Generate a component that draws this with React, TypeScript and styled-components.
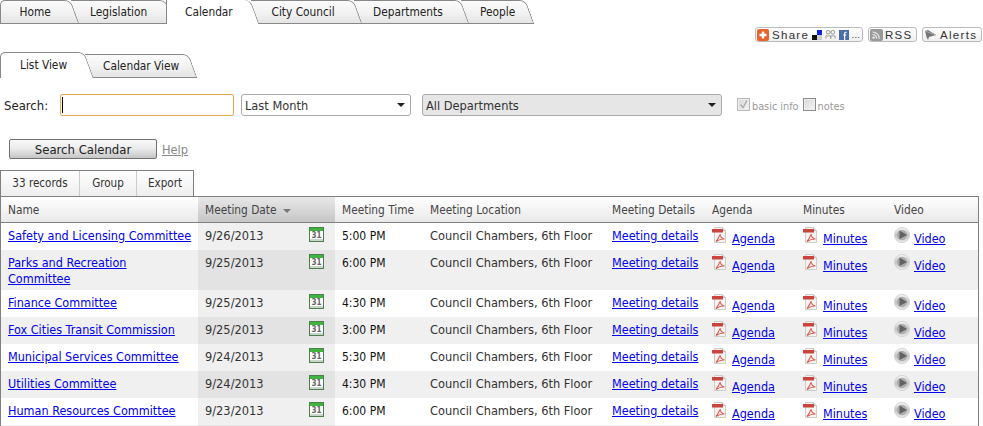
import React from "react";
import styled, { createGlobalStyle, css } from "styled-components";

const FONT = `"DejaVu Sans Condensed", "Noto Sans", Tahoma, sans-serif`;

const Global = createGlobalStyle`
  html, body { margin: 0; padding: 0; background: #fff; overflow: hidden; height: 426px; }
  body { font-family: ${FONT}; font-size: 12.7px; color: #333; }
`;

const Page = styled.div`
  width: 983px;
  height: 426px;
  overflow: hidden;
`;

const TabBar = styled.nav<{ $h: number; $mt?: number }>`
  display: flex;
  align-items: flex-end;
  height: ${(p) => p.$h}px;
  margin-top: ${(p) => p.$mt ?? 0}px;
`;

const tabGradient = "linear-gradient(#fbfbfb, #f4f4f4 45%, #e4e4e4)";

const Tab = styled.a<{ $w: number; $h: number; $z: number; $pl: number; $active?: boolean; $first?: boolean; $noTop?: boolean }>`
  position: relative;
  box-sizing: border-box;
  flex: none;
  width: ${(p) => p.$w}px;
  height: ${(p) => p.$h}px;
  margin-left: ${(p) => (p.$first ? 0 : -8)}px;
  padding-left: ${(p) => p.$pl}px;
  font-size: 11.8px;
  line-height: ${(p) => p.$h}px;
  color: #222;
  z-index: ${(p) => p.$z};
  white-space: nowrap;
  span { position: relative; z-index: 2; }

  &::before {
    content: "";
    position: absolute;
    left: 0;
    right: 14px;
    top: 0;
    bottom: 0;
    box-sizing: border-box;
    background: ${(p) => (p.$active ? "#fff" : tabGradient)};
    border-top: ${(p) => (p.$noTop ? "none" : "1px solid #888")};
    border-bottom: ${(p) => (p.$active ? "none" : "1px solid #888")};
    ${(p) => (p.$first || p.$active) && css`border-left: 1px solid #888;`}
    border-top-left-radius: ${(p) => (p.$first ? 5 : 0)}px;
    z-index: 1;
  }
  &::after {
    content: "";
    position: absolute;
    right: 4px;
    width: 22px;
    top: 0;
    bottom: 0;
    box-sizing: border-box;
    background: ${(p) => (p.$active ? "#fff" : tabGradient)};
    border-top: ${(p) => (p.$noTop ? "none" : "1px solid #888")};
    border-right: 1px solid #888;
    border-bottom: ${(p) => (p.$active ? "none" : "1px solid #888")};
    border-top-right-radius: 6px;
    transform: skewX(20deg);
    z-index: 0;
  }
`;

const ShareRow = styled.div`
  display: flex;
  justify-content: flex-end;
  gap: 5px;
  height: 15px;
  margin-top: 3px;
  padding-right: 1px;
`;

const ShareButton = styled.a<{ $w: number; $gap: number }>`
  box-sizing: border-box;
  width: ${(p) => p.$w}px;
  height: 15px;
  display: flex;
  align-items: center;
  gap: ${(p) => p.$gap}px;
  padding-left: 1px;
  border: 1px solid #bbb;
  border-radius: 3px;
  background: linear-gradient(#fff, #efefef);
  font-family: "Liberation Sans", Arial, sans-serif;
  font-size: 11.5px;
  letter-spacing: 1.3px;
  color: #333;
  svg { flex: none; }
`;

const More = styled.span`
  font-size: 9px;
  letter-spacing: 0;
  margin-left: -1px;
`;

const SearchRow = styled.div`
  display: flex;
  align-items: center;
  height: 22px;
  margin-top: 16px;
  padding-left: 4px;
`;

const SearchLabel = styled.label`
  width: 56px;
  font-size: 13px;
  color: #222;
`;

const InputWrap = styled.div`
  position: relative;
  width: 174px;
  height: 22px;
  &::after {
    content: "";
    position: absolute;
    left: 2px;
    top: 3px;
    width: 1px;
    height: 16px;
    background: #000;
  }
`;

const SearchInput = styled.input`
  box-sizing: border-box;
  width: 100%;
  height: 100%;
  border: 1px solid #e3aa55;
  border-radius: 2px;
  outline: none;
  box-shadow: inset 0 0 1px #f2d6a8;
  background: #fff;
`;

const SelectBox = styled.div<{ $w: number; $ml: number; $gray?: boolean }>`
  position: relative;
  box-sizing: border-box;
  width: ${(p) => p.$w}px;
  height: 22px;
  margin-left: ${(p) => p.$ml}px;
  padding-left: 3px;
  line-height: 21px;
  border: 1px solid #aaa;
  border-radius: 3px;
  background: ${(p) => (p.$gray ? "#e6e6e6" : "#fff")};
  color: #333;
  &::after {
    content: "";
    position: absolute;
    top: 8px;
    border: 4px solid transparent;
    border-top: 4px solid #222;
    border-bottom: none;
    right: 5px;
  }
`;

const CheckLabel = styled.span<{ $ml: number }>`
  display: flex;
  align-items: center;
  gap: 2px;
  margin-left: ${(p) => p.$ml}px;
  padding-top: 2px;
  color: #999;
  font-size: 10.8px;
`;

const CheckBox = styled.span<{ $dark?: boolean }>`
  box-sizing: border-box;
  flex: none;
  width: 13px;
  height: 13px;
  margin-top: -3px;
  border: 1px solid ${(p) => (p.$dark ? "#8c8c8c" : "#b8b8b8")};
  background: linear-gradient(135deg, #d8d8d8, #f4f4f4);
  box-shadow: inset 0 0 0 1px #eee;
  display: flex;
  svg { display: block; }
`;

const ActionRow = styled.div`
  display: flex;
  align-items: center;
  height: 20px;
  margin-top: 23px;
  padding-left: 9px;
`;

const SearchButton = styled.button`
  box-sizing: border-box;
  width: 148px;
  height: 20px;
  padding: 0;
  border: 1px solid #707070;
  border-radius: 2px;
  background: linear-gradient(#f8f8f8, #ececec 45%, #c6c6c6);
  font-family: inherit;
  font-size: 13px;
  color: #222;
`;

const HelpLink = styled.a`
  margin-left: 5px;
  color: #888;
  text-decoration: underline;
`;

const Toolbar = styled.div`
  display: flex;
  box-sizing: border-box;
  width: 194px;
  height: 26px;
  margin-top: 11px;
  border: 1px solid #808080;
  border-bottom: none;
  background: linear-gradient(#fff, #eee);
`;

const ToolItem = styled.a<{ $w: number }>`
  box-sizing: border-box;
  width: ${(p) => p.$w}px;
  font-size: 11.6px;
  line-height: 25px;
  text-align: center;
  color: #333;
  & + & { border-left: 1px solid #ccc; }
`;

const Grid = styled.table`
  table-layout: fixed;
  border-collapse: separate;
  border-spacing: 0;
  width: 979px;
  border-top: 1px solid #808080;
  border-left: 1px solid #808080;
  border-right: 1px solid #808080;
`;

const HeadCell = styled.th<{ $w: number; $sorted?: boolean }>`
  box-sizing: border-box;
  width: ${(p) => p.$w}px;
  height: 26px;
  padding: 0 7px;
  font-size: 11.8px;
  font-weight: normal;
  text-align: left;
  white-space: nowrap;
  color: #444;
  border-bottom: 1px solid #808080;
  background: ${(p) =>
    p.$sorted ? "linear-gradient(#e8e8e8, #c6c6c6)" : "linear-gradient(#fff, #e9e9e9)"};
`;

const SortCaret = styled.span`
  display: inline-block;
  margin-left: 6px;
  vertical-align: 1px;
  border: 4px solid transparent;
  border-top: 4px solid #777;
  border-bottom: none;
`;

const Row = styled.tr<{ $alt: boolean }>`
  height: 27px;
  background: ${(p) => (p.$alt ? "#f0f0f0" : "#fff")};
`;

const Cell = styled.td`
  padding: 5px 0 3px 7px;
  vertical-align: top;
  line-height: 16px;
  color: #333;
  white-space: nowrap;
`;

const NameCell = styled(Cell)`
  white-space: pre-line;
`;

const TimeCell = styled(Cell)`
  font-size: 12px;
  color: #111;
`;

const DateCell = styled(Cell)<{ $alt: boolean }>`
  padding-right: 11px;
  background: ${(p) => (p.$alt ? "#e3e3e3" : "#f0f0f0")};
`;

const DateInner = styled.div`
  display: flex;
  justify-content: space-between;
  svg { margin-top: -1px; }
`;

const RecordLink = styled.a`
  color: #0000ee;
  font-size: 12.5px;
  text-decoration: underline;
`;

const IconLink = styled.div`
  display: flex;
  gap: 5px;
  svg { flex: none; margin-top: -1px; }
  a { margin-top: 3px; }
`;

const VideoLink = styled(IconLink)`
  gap: 4px;
`;

const CalIcon = () => (
  <svg width="15" height="15" viewBox="0 0 15 15">
    <rect x="0.5" y="0.5" width="14" height="14" fill="#fff" stroke="#4c7f4c" />
    <rect x="1" y="1" width="13" height="3" fill="#3fb53f" />
    <rect x="1" y="12" width="13" height="2" fill="#c9d6c9" />
    <text x="7.5" y="11" textAnchor="middle" fontSize="8" fontWeight="700" fontFamily="'DejaVu Sans Condensed', sans-serif" fill="#666">31</text>
  </svg>
);

const PdfIcon = () => (
  <svg width="15" height="17" viewBox="0 0 15 17">
    <path d="M2.5 .5H10.5L13.5 3.5V15.5H2.5Z" fill="#f6f4f2" stroke="#cfcbc7" />
    <path d="M10.5 .5V3.5H13.5" fill="#ddd" stroke="#c8c4c0" />
    <rect x="0" y="2" width="11" height="3.5" fill="#c8443c" />
    <path d="M4 14.5C6 12 7.5 9.5 8 7C8.3 9.5 10 11.5 12.5 12C10 11.8 7 12.5 4 14.5Z" fill="none" stroke="#dd5a50" strokeWidth="1.1" />
  </svg>
);

const VideoIcon = () => (
  <svg width="16" height="17" viewBox="0 0 16 17">
    <defs>
      <linearGradient id="vg" x1="0" y1="0" x2="0" y2="1">
        <stop offset="0" stopColor="#f8f8f8" />
        <stop offset="0.5" stopColor="#c4c4c4" />
        <stop offset="1" stopColor="#ececec" />
      </linearGradient>
    </defs>
    <circle cx="8" cy="8" r="7.6" fill="url(#vg)" stroke="#d4d4d4" />
    <circle cx="8" cy="8" r="5.2" fill="#adadad" />
    <path d="M5.5 3.5L13 8L5.5 12Z" fill="#626262" />
  </svg>
);

const ShareIcon = () => (
  <svg width="12" height="12" viewBox="0 0 12 12">
    <rect width="12" height="12" rx="2" fill="#e8632c" />
    <path d="M6 2.5V9.5M2.5 6H9.5" stroke="#fff" strokeWidth="2.4" />
  </svg>
);

const DeliciousIcon = () => (
  <svg width="10" height="10" viewBox="0 0 10 10">
    <rect x="5" width="5" height="5" fill="#0a22e8" />
    <rect y="5" width="5" height="5" fill="#111" />
    <rect y="0" width="5" height="5" fill="#fff" />
    <rect x="5" y="5" width="5" height="5" fill="#ccc" />
  </svg>
);

const PeopleIcon = () => (
  <svg width="11" height="11" viewBox="0 0 12 11">
    <circle cx="3.5" cy="3" r="2" fill="none" stroke="#888" />
    <circle cx="8.5" cy="3" r="2" fill="none" stroke="#888" />
    <path d="M1 10V7H6V10M6.5 10V7H11V10" fill="none" stroke="#999" />
  </svg>
);

const FbIcon = () => (
  <svg width="10" height="10" viewBox="0 0 11 11">
    <rect width="11" height="11" fill="#4a6ea9" />
    <path d="M8.5 2.5H7.2C6.5 2.5 6.2 3 6.2 3.6V11M4.6 5.5H8" stroke="#fff" strokeWidth="1.3" fill="none" />
  </svg>
);

const RssIcon = () => (
  <svg width="13" height="12" viewBox="0 0 13 12">
    <rect width="13" height="12" rx="2" fill="#9a9a9a" />
    <circle cx="3.6" cy="8.6" r="1.2" fill="#eee" />
    <path d="M2.5 5.5A4 4 0 0 1 6.7 9.7M2.5 3A6.6 6.6 0 0 1 9.3 9.7" fill="none" stroke="#eee" strokeWidth="1.1" />
  </svg>
);

const AlertIcon = () => (
  <svg width="14" height="12" viewBox="0 0 14 12">
    <path d="M1 2L4 1L12 6L5 8L4 11L2.5 8Z" fill="#777" />
    <path d="M1 2L12 6" stroke="#aaa" />
  </svg>
);

const CheckMark = () => (
  <svg width="11" height="11" viewBox="0 0 11 11">
    <path d="M2.5 5.5L5 8.5L9 1.5" fill="none" stroke="#aaa" strokeWidth="1.4" />
  </svg>
);

const meetings = [
  ["Safety and Licensing Committee", "9/26/2013", "5:00 PM"],
  ["Parks and Recreation\nCommittee", "9/25/2013", "6:00 PM"],
  ["Finance Committee", "9/25/2013", "4:30 PM"],
  ["Fox Cities Transit Commission", "9/25/2013", "3:00 PM"],
  ["Municipal Services Committee", "9/24/2013", "5:30 PM"],
  ["Utilities Committee", "9/24/2013", "4:30 PM"],
  ["Human Resources Committee", "9/23/2013", "6:00 PM"],
];

const mainTabs = [
  { label: "Home", w: 79, pl: 19.5 },
  { label: "Legislation", w: 103, pl: 19 },
  { label: "Calendar", w: 93, pl: 19, active: true },
  { label: "City Council", w: 111, pl: 20.5 },
  { label: "Departments", w: 115, pl: 19 },
  { label: "People", w: 73, pl: 19 },
];

const columns: [string, number][] = [
  ["Name", 197],
  ["Meeting Date", 137],
  ["Meeting Time", 88],
  ["Meeting Location", 182],
  ["Meeting Details", 100],
  ["Agenda", 91],
  ["Minutes", 91],
  ["Video", 91],
];

export default function App() {
  return (
    <Page>
      <Global />
      <TabBar $h={24}>
        {mainTabs.map((t, i) => (
          <Tab
            key={t.label}
            $w={t.w}
            $h={24}
            $pl={t.pl}
            $first={i === 0}
            $active={t.active}
            $noTop={t.active}
            $z={t.active ? 20 : 10 - i}
          >
            <span>{t.label}</span>
          </Tab>
        ))}
      </TabBar>
      <ShareRow>
        <ShareButton $w={108} $gap={3}>
          <ShareIcon />
          Share
          <DeliciousIcon />
          <PeopleIcon />
          <FbIcon />
          <More>…</More>
        </ShareButton>
        <ShareButton $w={49} $gap={2}>
          <RssIcon />
          RSS
        </ShareButton>
        <ShareButton $w={60} $gap={2}>
          <AlertIcon />
          Alerts
        </ShareButton>
      </ShareRow>
      <TabBar $h={26} $mt={10}>
        <Tab $w={93} $h={26} $pl={20} $first $active $z={5}>
          <span>List View</span>
        </Tab>
        <Tab $w={112} $h={24} $pl={18} $z={4}>
          <span>Calendar View</span>
        </Tab>
      </TabBar>
      <SearchRow>
        <SearchLabel>Search:</SearchLabel>
        <InputWrap>
          <SearchInput aria-label="Search" />
        </InputWrap>
        <SelectBox $w={170} $ml={7}>Last Month</SelectBox>
        <SelectBox $w={300} $ml={11} $gray>All Departments</SelectBox>
        <CheckLabel $ml={15}>
          <CheckBox><CheckMark /></CheckBox>
          basic info
        </CheckLabel>
        <CheckLabel $ml={4}>
          <CheckBox $dark />
          notes
        </CheckLabel>
      </SearchRow>
      <ActionRow>
        <SearchButton>Search Calendar</SearchButton>
        <HelpLink>Help</HelpLink>
      </ActionRow>
      <Toolbar>
        <ToolItem $w={78}>33 records</ToolItem>
        <ToolItem $w={57}>Group</ToolItem>
        <ToolItem $w={57}>Export</ToolItem>
      </Toolbar>
      <Grid>
        <thead>
          <tr>
            {columns.map(([label, w], i) => (
              <HeadCell key={label} $w={w} $sorted={i === 1}>
                {label}
                {i === 1 && <SortCaret />}
              </HeadCell>
            ))}
          </tr>
        </thead>
        <tbody>
          {meetings.map(([name, date, time], i) => {
            const alt = i % 2 === 1;
            return (
              <Row key={name} $alt={alt}>
                <NameCell><RecordLink>{name}</RecordLink></NameCell>
                <DateCell $alt={alt}>
                  <DateInner>
                    {date}
                    <CalIcon />
                  </DateInner>
                </DateCell>
                <TimeCell>{time}</TimeCell>
                <Cell>Council Chambers, 6th Floor</Cell>
                <Cell><RecordLink>Meeting details</RecordLink></Cell>
                <Cell><IconLink><PdfIcon /><RecordLink>Agenda</RecordLink></IconLink></Cell>
                <Cell><IconLink><PdfIcon /><RecordLink>Minutes</RecordLink></IconLink></Cell>
                <Cell><VideoLink><VideoIcon /><RecordLink>Video</RecordLink></VideoLink></Cell>
              </Row>
            );
          })}
          <Row $alt>
            <Cell />
            <DateCell $alt />
            <Cell />
            <Cell />
            <Cell />
            <Cell />
            <Cell />
            <Cell />
          </Row>
        </tbody>
      </Grid>
    </Page>
  );
}
